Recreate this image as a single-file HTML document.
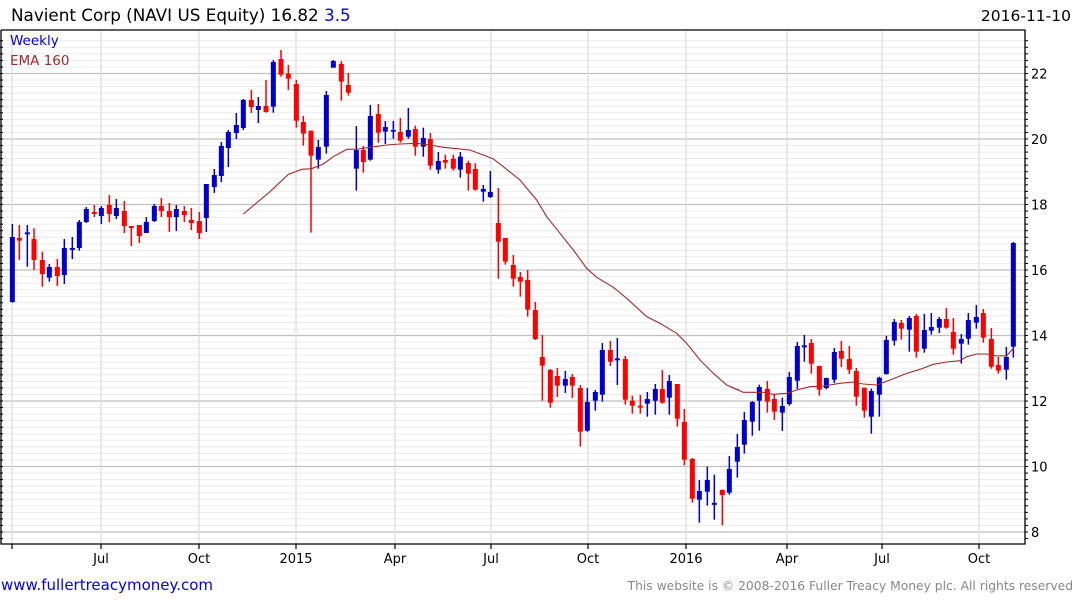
<!DOCTYPE html>
<html><head><meta charset="utf-8"><style>
html,body{margin:0;padding:0;background:#fff;width:1075px;height:600px;overflow:hidden;font-family:"DejaVu Sans",sans-serif}
svg{position:absolute;left:0;top:0}
</style></head><body>
<svg id="s" width="1075" height="600" xmlns="http://www.w3.org/2000/svg" font-family="DejaVu Sans, sans-serif">
<g id="grid"></g>
<g id="cs"></g>
<polyline id="ema" fill="none" stroke="#a52a2a" stroke-width="1.1"/>
<text x="11" y="21" font-size="16.8" fill="#000">Navient Corp (NAVI US Equity) 16.82 <tspan fill="#0000ff">3.5</tspan></text>
<text x="1071" y="21" font-size="15.5" fill="#000" text-anchor="end">2016-11-10</text>
<text x="10" y="45" font-size="13.5" fill="#0000dd">Weekly</text>
<text x="10" y="65" font-size="13.5" fill="#a52a2a">EMA 160</text>
<text x="1" y="590" font-size="15" fill="#0000ee">www.fullertreacymoney.com</text>
<text x="1073" y="590" font-size="12.3" fill="#888" text-anchor="end">This website is © 2008-2016 Fuller Treacy Money plc. All rights reserved</text>
<g id="ax" font-size="13" fill="#000"></g>
</svg>
<script>
var NS="http://www.w3.org/2000/svg";
function el(p,t,a){var e=document.createElementNS(NS,t);for(var k in a)e.setAttribute(k,a[k]);p.appendChild(e);return e;}
var g=document.getElementById('grid'),ax=document.getElementById('ax'),cs=document.getElementById('cs');
var L=1,R=1025,T=30,B=544;
function py(p){return 139-(p-20)*32.75;}
for(var v=7.6;v<=23.01;v+=0.2){var y=py(v);if(y<T+1||y>B-1)continue;var maj=Math.abs(Math.round(v)-v)<0.01&&Math.round(v)%2==0;
 el(g,'line',{x1:L,x2:R,y1:y,y2:y,stroke:maj?'#c0c0c0':'#ececec','stroke-width':maj?1.3:1});
 el(ax,'line',{x1:R,x2:R+3,y1:y,y2:y,stroke:'#000','stroke-width':1});
 el(ax,'line',{x1:L-1,x2:L+2,y1:y,y2:y,stroke:'#000','stroke-width':1});
 if(maj)el(ax,'text',{x:1031,y:y+5}).textContent=Math.round(v);}
var xs=[[12,''],[101,'Jul'],[199,'Oct'],[296,'2015'],[395,'Apr'],[491,'Jul'],[588,'Oct'],[686,'2016'],[787,'Apr'],[882,'Jul'],[979,'Oct']];
xs.forEach(function(a){el(g,'line',{x1:a[0],x2:a[0],y1:T,y2:B,stroke:'#dcdcdc','stroke-width':1.2});
 el(ax,'line',{x1:a[0],x2:a[0],y1:B,y2:B+5,stroke:'#000','stroke-width':1.2});
 if(a[1])el(ax,'text',{x:a[0],y:563,'text-anchor':'middle'}).textContent=a[1];});
el(ax,'polyline',{points:L+','+T+' '+R+','+T+' '+R+','+B+' '+L+','+B+' '+L+','+T,fill:'none',stroke:'#000','stroke-width':1.3});
var z1=[[37,582,621,816,818,'b'],[58,585,624,632,690,'r'],[82,585,608,612,710,'b'],[102,595,627,690,720,'r'],[127,665,690,732,770,'r'],[148,702,711,743,755,'b'],[172,687,711,738,768,'r'],[193,627,654,735,762,'b'],[217,621,654,660,687,'b'],[238,570,576,654,662,'b'],[259,531,537,576,579,'b'],[283,525,546,552,561,'r'],[304,528,534,558,582,'b'],[328,495,525,552,577,'r'],[349,507,534,558,567,'b'],[373,513,543,588,609,'r'],[394,588,588,594,648,'r'],[418,585,585,618,639,'r'],[439,561,576,609,609,'b'],[463,522,528,573,576,'b'],[484,504,528,543,561,'r'],[508,519,543,561,606,'r'],[529,525,537,561,603,'b'],[553,528,543,555,576,'r'],[574,534,570,579,600,'r'],[598,546,573,609,627,'r'],[619,462,462,564,606,'b'],[643,417,435,471,489,'b'],[664,336,348,438,456,'b'],[685,300,306,354,411,'b'],[709,249,285,309,327,'b'],[730,207,210,294,300,'b'],[754,180,210,231,249,'r'],[775,201,228,240,279,'b']];
var z2=[[108,120,198,216,218,'r'],[130,60,66,200,218,'b'],[153,30,57,104,110,'r'],[175,75,101,116,150,'r'],[199,120,132,242,263,'r'],[220,228,246,281,317,'r'],[243,272,272,347,578,'r'],[265,300,321,359,386,'b'],[289,153,165,320,341,'b'],[310,60,63,83,83,'b'],[334,63,72,125,182,'r'],[355,99,135,158,167,'r'],[379,258,330,386,452,'b'],[400,318,330,366,398,'r'],[421,195,228,359,362,'b'],[445,192,222,278,308,'r'],[466,243,261,275,312,'b'],[490,243,270,275,296,'b'],[511,234,276,302,308,'r'],[535,204,270,290,296,'b'],[556,257,267,320,347,'r'],[580,263,294,320,350,'b'],[601,279,297,377,389,'r'],[625,336,363,389,401,'b'],[646,344,360,368,386,'r'],[670,344,356,386,392,'r'],[691,336,350,389,413,'b'],[715,362,369,401,452,'r'],[736,370,387,449,452,'r']];
var z3=[[10,45,57,65,95,'b'],[31,3,66,81,84,'b'],[55,54,159,215,326,'r'],[76,204,204,275,284,'r'],[100,255,285,326,350,'r'],[121,306,321,335,380,'r'],[143,300,330,419,440,'r'],[166,396,420,507,510,'r'],[187,495,561,587,692,'r'],[211,597,600,698,713,'r'],[232,594,618,647,681,'r'],[256,603,627,647,669,'b'],[277,612,621,647,684,'r'],[301,645,654,785,830,'r'],[322,654,696,782,785,'b'],[346,660,666,692,722,'b'],[367,519,540,674,695,'b'],[391,513,540,575,588,'r'],[412,504,567,569,645,'b'],[436,558,567,689,704,'r'],[457,677,692,707,731,'r'],[481,675,707,713,731,'r'],[502,666,687,701,740,'b'],[526,642,657,692,734,'b'],[547,600,657,698,701,'r'],[568,615,633,683,734,'b'],[592,642,642,746,770,'r'],[613,717,756,869,886,'r'],[637,864,867,986,998,'r'],[658,930,963,989,1058,'b'],[682,890,930,965,1007,'b'],[703,914,1000,1003,1049,'b']];
var z4=[[7,778,780,795,886,'r'],[28,678,717,788,794,'b'],[52,612,651,695,743,'b'],[73,546,570,644,671,'b'],[97,513,516,575,617,'b'],[118,464,471,512,602,'b'],[142,453,477,515,548,'r'],[163,492,507,545,570,'r'],[187,503,528,548,603,'b'],[208,426,441,522,527,'b'],[232,336,348,452,477,'b'],[253,315,347,351,395,'b'],[274,327,339,401,431,'r'],[298,407,408,479,497,'r'],[319,443,444,474,478,'b'],[343,354,366,449,459,'b'],[364,333,363,386,411,'r'],[388,348,387,419,432,'r'],[409,414,423,500,527,'r'],[433,473,473,542,563,'r'],[454,476,483,560,611,'b'],[478,440,443,494,560,'b'],[499,318,330,432,434,'b'],[523,267,276,332,347,'b'],[544,270,279,296,329,'r'],[568,258,264,299,365,'b'],[589,252,258,365,383,'r'],[613,252,300,356,368,'b'],[634,249,291,302,314,'b'],[658,261,267,293,309,'b'],[679,234,267,293,296,'r'],[700,264,306,356,374,'r'],[724,312,327,341,401,'b'],[745,249,270,326,344,'b'],[769,225,261,278,296,'b'],[790,237,249,323,338,'r'],[814,294,327,410,416,'r'],[835,381,405,422,431,'r'],[859,351,381,419,449,'b'],[880,36,39,350,383,'b']];
function draw(arr,x0,y0){arr.forEach(function(c){var x=x0+c[0]/3,col=c[5]=='b'?'#0000cc':'#ff0000';
 var hi=y0+c[1]/3,t=y0+c[2]/3,b=y0+c[3]/3,lo=y0+c[4]/3;if(b-t<1.5){var m=(t+b)/2;t=m-1;b=m+1;}
 el(cs,'rect',{x:x-0.75,y:hi,width:1.5,height:lo-hi,fill:col});
 el(cs,'rect',{x:x-2.5,y:t,width:5,height:b-t,fill:col});});}
draw(z1,0,30);draw(z2,230,40);draw(z3,480,170);draw(z4,720,230);
var e2=[[40,522],[120,455],[175,403],[215,388],[245,386],[280,372],[310,350],[350,328],[385,327],[420,322],[470,315],[510,312],[560,310],[600,315],[640,322],[680,326],[720,330],[760,345],[790,357],[820,380]];
var e3=[[120,30],[170,90],[200,140],[240,190],[280,240],[320,295],[350,322],[400,352],[440,385],[500,440],[540,460],[590,490],[620,520],[660,570],[700,610],[740,645],[780,662]];
var e4=[[30,470],[70,487],[130,487],[160,493],[200,490],[230,480],[270,470],[310,468],[360,460],[400,456],[430,462],[470,465],[510,450],[560,430],[600,418],[640,403],[680,396],[720,392],[740,380],[770,372],[800,372],[830,378],[860,377],[880,355]];
var pts=[];e2.forEach(function(p){pts.push((230+p[0]/3)+','+(40+p[1]/3));});e3.forEach(function(p){pts.push((480+p[0]/3)+','+(170+p[1]/3));});e4.forEach(function(p){pts.push((720+p[0]/3)+','+(230+p[1]/3));});
document.getElementById('ema').setAttribute('points',pts.join(' '));
</script>
</body></html>
